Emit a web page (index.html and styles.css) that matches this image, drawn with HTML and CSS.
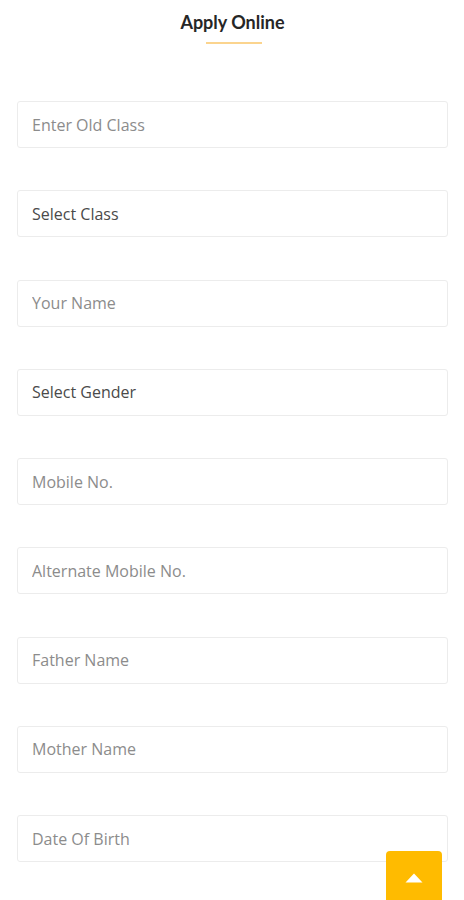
FILE: index.html
```html
<!DOCTYPE html>
<html lang="en">
<head>
    <meta charset="UTF-8">
    <meta name="viewport" content="width=device-width, initial-scale=1.0">
    <title>Apply Online</title>
    <link rel="stylesheet" href="styles.css">
</head>
<body>
    <div class="page">
        <div class="heading">
            <h2 class="title">Apply Online</h2>
            <span class="underline"></span>
        </div>
        <form class="form">
            <input class="field" type="text" placeholder="Enter Old Class">
            <select class="field select">
                <option>Select Class</option>
            </select>
            <input class="field" type="text" placeholder="Your Name">
            <select class="field select">
                <option>Select Gender</option>
            </select>
            <input class="field" type="text" placeholder="Mobile No.">
            <input class="field" type="text" placeholder="Alternate Mobile No.">
            <input class="field" type="text" placeholder="Father Name">
            <input class="field" type="text" placeholder="Mother Name">
            <input class="field" type="text" placeholder="Date Of Birth">
        </form>
    </div>
    <a class="to-top" href="#">
        <svg width="18" height="10" viewBox="0 0 18 10"><path d="M9 0.5 L17.5 9.5 L0.5 9.5 Z" fill="#fff"/></svg>
    </a>
</body>
</html>
```
FILE: styles.css
```css
* {
    box-sizing: border-box;
}

body {
    margin: 0;
    background: #fff;
    font-family: "Open Sans", sans-serif;
}

.page {
    padding: 0 16px 0 17px;
}

.heading {
    display: flex;
    flex-direction: column;
    align-items: center;
    padding-top: 11px;
}

.title {
    margin: 0;
    font-family: Lato, sans-serif;
    font-weight: 700;
    font-size: 18px;
    line-height: 22px;
    color: #262626;
}

.underline {
    display: block;
    width: 56px;
    height: 2px;
    margin-top: 9px;
    margin-left: 2px;
    background: #fbd48e;
}

.form {
    display: flex;
    flex-direction: column;
    gap: 42.25px;
    padding-top: 57px;
}

.field {
    width: 100%;
    height: 47px;
    border: 1px solid #ececec;
    border-radius: 3px;
    background: #fff;
    padding: 0 14px;
    font-family: "Open Sans", sans-serif;
    font-size: 16px;
    color: #555;
    outline: none;
}

.field::placeholder {
    color: #8c8c8c;
}

.select {
    -webkit-appearance: none;
    appearance: none;
    color: #4a4a4a;
}

.to-top {
    position: fixed;
    right: 22px;
    top: 851px;
    width: 56px;
    height: 56px;
    border-radius: 4px;
    background: #ffbb00;
    display: flex;
    justify-content: center;
    padding-top: 22px;
}

.to-top svg {
    display: block;
}
```
